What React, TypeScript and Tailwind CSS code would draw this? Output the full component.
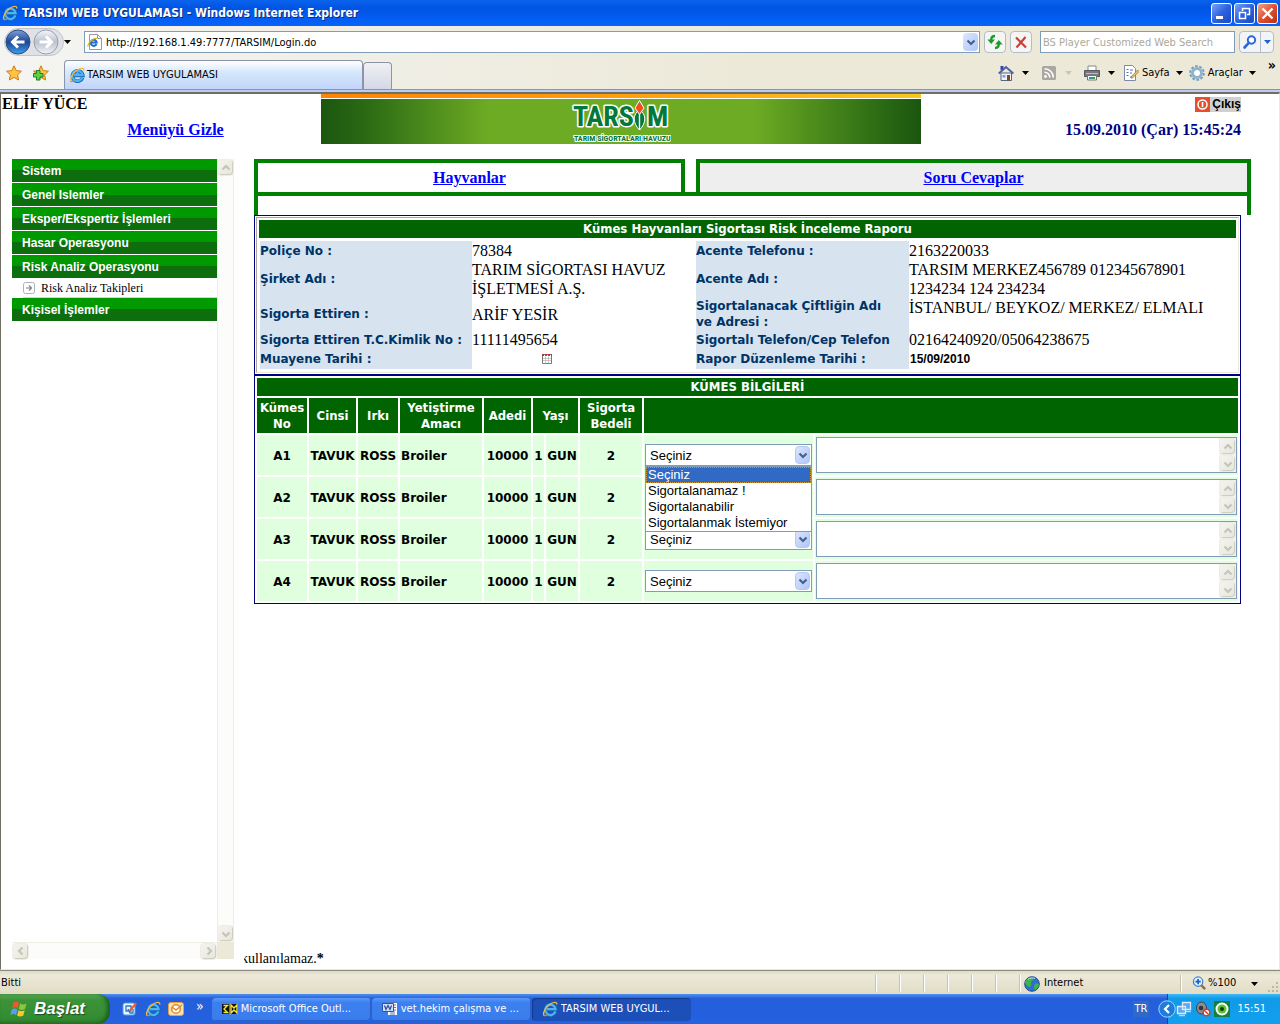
import type { ReactNode } from "react";

const menuTop = ["Sistem", "Genel Islemler", "Eksper/Ekspertiz İşlemleri", "Hasar Operasyonu", "Risk Analiz Operasyonu"];

const options = ["Seçiniz", "Sigortalanamaz !", "Sigortalanabilir", "Sigortalanmak İstemiyor"];

const coops = [
    { no: "A1", kind: "TAVUK", breed: "ROSS", purpose: "Broiler", count: "10000", age: "1", unit: "GUN", price: "2" },
    { no: "A2", kind: "TAVUK", breed: "ROSS", purpose: "Broiler", count: "10000", age: "1", unit: "GUN", price: "2" },
    { no: "A3", kind: "TAVUK", breed: "ROSS", purpose: "Broiler", count: "10000", age: "1", unit: "GUN", price: "2" },
    { no: "A4", kind: "TAVUK", breed: "ROSS", purpose: "Broiler", count: "10000", age: "1", unit: "GUN", price: "2" },
];

function IeLogo({ className = "size-4" }: { className?: string }) {
    return (
        <svg viewBox="0 0 16 16" className={className} aria-hidden="true">
            <path d="M13.6 10.600a5.200 5.200 0 1 1 .2-2.200H5" fill="none" stroke="#1464b8" strokeWidth="3.600" />
            <path d="M13.4 10.400a5.200 5.200 0 1 1 .2-2.200H5" fill="none" stroke="#4fb2f2" strokeWidth="2.200" />
            <path d="M2 14.400C.4 12.400 3.200 7 7.600 3.600 11.400.8 15 .6 14.800 3" fill="none" stroke="#f6b93a" strokeWidth="1.300" strokeLinecap="round" />
            <path d="M2 14.400c.8.500 2 .2 3-.4" fill="none" stroke="#d8920f" strokeWidth="1.200" strokeLinecap="round" />
        </svg>
    );
}

function Caret({ className = "fill-black" }: { className?: string }) {
    return (
        <svg viewBox="0 0 7 4" className={`h-1 w-[7px] shrink-0 ${className}`} aria-hidden="true">
            <path d="M0 0h7L3.500 4z" />
        </svg>
    );
}

function Chevron({ dir, className }: { dir: "up" | "down" | "left" | "right"; className: string }) {
    const d = {
        up: "M1.500 6.500 5 3l3.500 3.500",
        down: "M1.500 3.500 5 7l3.500-3.500",
        left: "M6.500 1.500 3 5l3.500 3.500",
        right: "M3.500 1.500 7 5 3.500 8.500",
    }[dir];
    return (
        <svg viewBox="0 0 10 10" className={`size-2.5 ${className}`} aria-hidden="true">
            <path d={d} fill="none" strokeWidth="2.200" />
        </svg>
    );
}

function ScrollButton({ dir }: { dir: "up" | "down" | "left" | "right" }) {
    return (
        <span className="flex size-[17px] shrink-0 items-center justify-center rounded-sm border border-[#eeede5] bg-linear-to-br from-[#f4f3ee] to-[#e8e7dd] shadow-[inset_-1px_-1px_0_#d0cebd]">
            <Chevron dir={dir} className="stroke-[#c5c4bb]" />
        </span>
    );
}

function WindowButton({ label, red, children }: { label: string; red?: boolean; children: ReactNode }) {
    return (
        <button
            aria-label={label}
            className={`size-[21px] rounded-[3px] border border-white ${red ? "bg-linear-to-br from-[#f0a08a] via-[#dd5030] to-[#b8300e]" : "bg-linear-to-br from-[#7ba2f4] via-[#2c62e0] to-[#1c48c4]"}`}
        >
            <svg viewBox="0 0 19 19" className="size-full" aria-hidden="true">
                {children}
            </svg>
        </button>
    );
}

function TitleBar() {
    return (
        <header className="flex h-[26px] items-center bg-linear-to-b from-[#0a63ec] via-[#0054e3] via-30% to-[#0663fb] pr-0.5 pl-0.5">
            <IeLogo />
            <h1 className="ml-1 flex-1 text-[12px] font-bold text-white [text-shadow:1px_1px_0_#0a2a80]">
                TARSIM WEB UYGULAMASI - Windows Internet Explorer
            </h1>
            <div className="flex gap-0.5">
                <WindowButton label="Simge durumuna küçült">
                    <path d="M4 12h7v3H4z" fill="#fff" />
                </WindowButton>
                <WindowButton label="Önceki boyut">
                    <path d="M7.500 7V4.500h7v6H12M7 4.500h8" fill="none" stroke="#fff" strokeWidth="1.500" />
                    <path d="M4.500 8.500h6v6h-6zM4 8.500h7" fill="none" stroke="#fff" strokeWidth="1.500" />
                </WindowButton>
                <WindowButton label="Kapat" red>
                    <path d="m4.500 4.500 10 10M14.500 4.500l-10 10" stroke="#fff" strokeWidth="2.300" />
                </WindowButton>
            </div>
        </header>
    );
}

function NavButtons() {
    return (
        <div className="flex w-[60px] shrink-0 items-center rounded-full border border-[#c3c6cc] bg-[#dfe1e4]">
            <button aria-label="Geri">
                <svg viewBox="0 0 26 26" className="size-[26px]" aria-hidden="true">
                    <defs>
                        <linearGradient id="back" x1="0" y1="0" x2="0" y2="1">
                            <stop offset="0" stopColor="#7f9fd6" />
                            <stop offset=".5" stopColor="#1c4596" />
                            <stop offset="1" stopColor="#3ea0ea" />
                        </linearGradient>
                    </defs>
                    <circle cx="13" cy="13" r="12" fill="url(#back)" stroke="#2a4a84" />
                    <path d="M19.500 13H8M13 7.500 7.500 13l5.500 5.500" fill="none" stroke="#fff" strokeWidth="3" />
                </svg>
            </button>
            <button aria-label="İleri" className="ml-0.5">
                <svg viewBox="0 0 26 26" className="size-[26px]" aria-hidden="true">
                    <defs>
                        <linearGradient id="fwd" x1="0" y1="0" x2="0" y2="1">
                            <stop offset="0" stopColor="#f6f8fa" />
                            <stop offset=".5" stopColor="#b9c2ce" />
                            <stop offset="1" stopColor="#f1f5f9" />
                        </linearGradient>
                    </defs>
                    <circle cx="13" cy="13" r="12" fill="url(#fwd)" stroke="#98a0ac" />
                    <path d="M6.500 13H18M13 7.500l5.500 5.500-5.500 5.500" fill="none" stroke="#fff" strokeWidth="3" />
                </svg>
            </button>
        </div>
    );
}

function AddressRow() {
    return (
        <div className="flex h-[31px] items-center bg-linear-to-r from-[#f4f4f2] to-[#ece9d8] to-60% pr-1.5 pl-1">
            <NavButtons />
            <Caret />
            <div className="ml-[13px] flex h-[22px] flex-1 items-center border border-[#7f9db9] bg-white">
                <svg viewBox="0 0 16 16" className="ml-0.5 size-4" aria-hidden="true">
                    <path d="M2.500.5h8l4 4v11h-12z" fill="#fff" stroke="#9a9a9a" />
                    <path d="M10.500.5v4h4" fill="none" stroke="#9a9a9a" />
                    <path d="M9.500 10a3 3 0 1 1 .2-1.500H4" fill="none" stroke="#1c6fc4" strokeWidth="2" />
                    <path d="M1 12.500C0 10 6 4 10.500 4" fill="none" stroke="#f0a818" strokeWidth="1.200" />
                </svg>
                <input
                    aria-label="Adres"
                    defaultValue="http://192.168.1.49:7777/TARSIM/Login.do"
                    className="ml-[3px] h-5 min-w-0 flex-1 pt-px outline-none"
                />
                <button aria-label="Adres listesi" className="mr-px flex h-[18px] w-[15px] items-center justify-center rounded-sm bg-linear-to-br from-[#dbe5fd] to-[#b0c6f8]">
                    <Chevron dir="down" className="stroke-[#44618c]" />
                </button>
            </div>
            <button aria-label="Yenile" className="ml-1 flex size-[22px] items-center justify-center rounded-sm border border-[#b4bccb] bg-[#f5f5f3]">
                <svg viewBox="0 0 16 16" className="size-4 shrink-0" aria-hidden="true">
                    <path d="M8 2C5.500 2 4.200 3.500 4.200 6" fill="none" stroke="#1f9a2c" strokeWidth="2.400" />
                    <path d="M.4 5.500h7.600L4.200 10z" fill="#1f9a2c" />
                    <path d="M8 14c2.500 0 3.800-1.500 3.800-4" fill="none" stroke="#1f9a2c" strokeWidth="2.400" />
                    <path d="M8 10.500h7.600L11.800 6z" fill="#1f9a2c" />
                </svg>
            </button>
            <button aria-label="Durdur" className="ml-1 flex size-[22px] items-center justify-center rounded-sm border border-[#b4bccb] bg-[#f5f5f3]">
                <svg viewBox="0 0 16 16" className="size-4 shrink-0" aria-hidden="true">
                    <path d="m3 3.500 10 10M12.500 3 3.500 13.500" stroke="#c9403a" strokeWidth="2.200" />
                </svg>
            </button>
            <input
                aria-label="Ara"
                placeholder="BS Player Customized Web Search"
                className="ml-2 h-[22px] w-[195px] border border-[#7f9db9] bg-white px-0.5 pt-px outline-none placeholder:text-[#aca899]"
            />
            <div className="ml-1 flex h-[22px] rounded-sm border border-[#b4bccb] bg-[#f3f4f6]">
                <button aria-label="Aramayı başlat" className="flex w-5 items-center justify-center">
                    <svg viewBox="0 0 16 16" className="size-4" aria-hidden="true">
                        <circle cx="9.500" cy="6" r="3.700" fill="#fff" stroke="#2a66e0" strokeWidth="2" />
                        <path d="M6.800 8.800 2.500 13.500" stroke="#2a66e0" strokeWidth="2.600" strokeLinecap="round" />
                    </svg>
                </button>
                <button aria-label="Arama seçenekleri" className="flex w-[13px] items-center justify-center border-l border-[#b4bccb]">
                    <Caret className="fill-[#1d62d8]" />
                </button>
            </div>
        </div>
    );
}

function StarIcon({ plus }: { plus?: boolean }) {
    return (
        <svg viewBox="0 0 16 16" className="size-4" aria-hidden="true">
            <path d="m8 .8 2.200 4.800 5.200.6-3.800 3.600 1 5.200L8 12.400 3.400 15l1-5.200L.6 6.200l5.200-.6z" fill="#fdc641" stroke="#d0781a" />
            {plus && <path d="M3.500 5.500h3.500v3h3V12H7v3H3.500v-3h-3V8.500h3z" fill="#5fd04a" stroke="#1e8424" />}
        </svg>
    );
}

function TabRow() {
    return (
        <div className="flex h-8 bg-linear-to-r from-[#f4f4f2] to-[#ece9d8] to-60% pr-1 pl-1.5">
            <div className="flex items-center gap-[11px]">
                <button aria-label="Sık kullanılanlar"><StarIcon /></button>
                <button aria-label="Sık kullanılanlara ekle"><StarIcon plus /></button>
            </div>
            <div className="mt-[3px] ml-[15px] flex w-[299px] items-center rounded-t border border-b-0 border-[#8c94a8] bg-linear-to-b from-white via-[#d6e8fb] via-40% to-[#c2d4fa] pl-1">
                <IeLogo />
                <span className="ml-0.5">TARSIM WEB UYGULAMASI</span>
            </div>
            <button aria-label="Yeni sekme" className="mt-[5px] w-[29px] rounded-t border border-b-0 border-[#8c94a8] bg-linear-to-b from-[#f0f0f4] to-[#d4d8e6]" />
            <div className="ml-auto flex items-center">
                <button className="flex items-center gap-2" aria-label="Giriş sayfası">
                    <svg viewBox="0 0 16 16" className="size-4" aria-hidden="true">
                        <path d="M2.500 1h3v4h-3z" fill="#3440c0" />
                        <path d="M3 8h10.500v7.500H3z" fill="#f4f4f8" stroke="#5a6480" />
                        <path d="M.8 8.500 8 2l7.400 6.500" fill="none" stroke="#4e62a4" strokeWidth="2" />
                        <path d="M9 10h3v5.500H9z" fill="#7a4a24" />
                        <path d="M4.500 10h3v2.500h-3z" fill="#6fa4e0" />
                    </svg>
                    <Caret />
                </button>
                <button className="ml-3 flex items-center gap-2" aria-label="Akışlar">
                    <svg viewBox="0 0 16 16" className="size-4" aria-hidden="true">
                        <rect x="1" y="1" width="14" height="14" rx="1.500" fill="#a9a8a0" />
                        <circle cx="4.500" cy="11.500" r="1.400" fill="#fff" />
                        <path d="M3.500 7.200a5.300 5.300 0 0 1 5.300 5.300M3.500 3.700a8.800 8.800 0 0 1 8.800 8.800" fill="none" stroke="#fff" strokeWidth="1.600" />
                    </svg>
                    <Caret className="fill-[#c9c6b8]" />
                </button>
                <button className="ml-3 flex items-center gap-2" aria-label="Yazdır">
                    <svg viewBox="0 0 16 16" className="size-4" aria-hidden="true">
                        <path d="M4 1h8v5H4z" fill="#fff" stroke="#888" />
                        <path d="M.5 5.500h15v6H.5z" fill="#77797e" stroke="#55575c" />
                        <path d="M2 8.500h12" stroke="#b9bbc0" />
                        <path d="M3.500 10.500h9v4.500h-9z" fill="#fff" stroke="#777" />
                        <path d="M5 12h3v2H5z" fill="#2b8de0" />
                        <path d="M8 12h3v2H8z" fill="#38a048" />
                    </svg>
                    <Caret />
                </button>
                <button className="ml-2 flex items-center">
                    <svg viewBox="0 0 16 16" className="size-4" aria-hidden="true">
                        <path d="M1.500.5h8l3 3v12h-11z" fill="#fff" stroke="#7c8aa8" />
                        <path d="M3.500 4.500h2M3.500 7.500h2M3.500 10.500h2M7 5h3M7 8h2M7 12h3" stroke="#4c72b8" />
                        <path d="m8 12 6.500-7L16 6.500 9.500 13H8z" fill="#f0c46a" stroke="#9a6a1e" strokeWidth=".7" />
                    </svg>
                    <span className="mr-1.5 ml-[3px]">Sayfa</span>
                    <Caret />
                </button>
                <button className="ml-1.5 flex items-center">
                    <svg viewBox="0 0 16 16" className="size-4" aria-hidden="true">
                        <circle cx="8" cy="8" r="6.800" fill="none" stroke="#7c9cb4" strokeWidth="2" strokeDasharray="2.700 1.570" />
                        <circle cx="8" cy="8" r="4.500" fill="#fff" stroke="#8fb4d0" strokeWidth="3" />
                    </svg>
                    <span className="mr-1.5 ml-[3px]">Araçlar</span>
                    <Caret />
                </button>
                <span className="ml-3 self-start text-[14px] leading-4 font-bold">»</span>
            </div>
        </div>
    );
}

function Banner() {
    return (
        <div className="w-[600px] shrink-0">
            <div className="h-1 bg-linear-to-r from-[#ff8400] via-[#ff9f0a] to-[#f7c81c]" />
            <div className="mt-px flex h-[45px] justify-center bg-[linear-gradient(to_right,#1b560f_0%,#2c6c14_8%,#6eab24_28%,#6eab24_72%,#2c6c14_93%,#1b560f_100%)]">
                <svg viewBox="0 0 100 45" className="h-[45px] w-[100px]" role="img" aria-label="TARSİM">
                    <g fill="#04783a" stroke="#fff" strokeWidth="3" paintOrder="stroke" strokeLinejoin="round" className="font-['Liberation_Sans_Narrow','Roboto_Condensed','Liberation_Sans',sans-serif] font-bold">
                        <text x="2" y="27" fontSize="28">TARS</text>
                        <text x="76" y="27" fontSize="28">M</text>
                        <text x="3" y="42" fontSize="8" strokeWidth="2">TARIM SİGORTALARI HAVUZU</text>
                    </g>
                    <path d="M68.500 11c-7 4-7 13 0 20 7-7 7-16 0-20z" fill="#04783a" stroke="#fff" />
                    <path d="M68.500 14v17" stroke="#fff" strokeWidth="1.400" />
                    <path d="m68.500 1.500 4.500 7.500-4.500 6.500L64 9z" fill="#f04e23" stroke="#fff" />
                </svg>
            </div>
        </div>
    );
}

function PageHeader() {
    return (
        <div className="flex h-[65px] text-[16px] leading-5 font-bold">
            <div className="w-[319px] shrink-0">
                <p>ELİF YÜCE</p>
                <p className="mt-1.5 pl-7 text-center">
                    <a href="#menu" className="text-[#0000ff] underline">Menüyü Gizle</a>
                </p>
            </div>
            <Banner />
            <div className="flex flex-1 flex-col items-end pt-[3px] pr-[38px]">
                <button className="flex h-[15px] items-center gap-0.5 bg-[#d0d0d0] font-['Liberation_Sans',sans-serif] text-[12px] leading-[15px]">
                    <svg viewBox="0 0 15 15" className="size-[15px]" aria-hidden="true">
                        <path d="M0 0h15v15H0z" fill="#e2502c" />
                        <circle cx="7.500" cy="7.500" r="4.500" fill="none" stroke="#fff" strokeWidth="1.500" />
                        <path d="M7.500 5v5" stroke="#fff" strokeWidth="1.600" />
                    </svg>
                    Çıkış
                </button>
                <p className="mt-2 text-[#000080]">15.09.2010 (Çar) 15:45:24</p>
            </div>
        </div>
    );
}

function MenuItem({ label }: { label: string }) {
    return (
        <a
            href="#menu"
            className="block h-[23px] bg-linear-to-b from-[#009900] from-50% to-[#0c6e0c] to-50% pl-2.5 font-['Liberation_Sans',sans-serif] text-[12px] leading-6 font-bold text-white"
        >
            {label}
        </a>
    );
}

function Sidebar() {
    return (
        <aside className="flex w-[222px] shrink-0 flex-col pb-2.5">
            <div className="flex flex-1">
                <nav className="flex flex-1 flex-col gap-px">
                    {menuTop.map((label) => (
                        <MenuItem key={label} label={label} />
                    ))}
                    <a href="#takip" className="-mt-px ml-[11px] flex h-5 items-center gap-1.5 border-b border-[#d4d4d4] text-[12px] leading-[18px]">
                        <svg viewBox="0 0 12 12" className="size-3" aria-hidden="true">
                            <rect x=".5" y=".5" width="11" height="11" rx="2" fill="#fff" stroke="#b0b0b8" />
                            <path d="M3 6h5M6 3.500 8.500 6 6 8.500" fill="none" stroke="#808088" strokeWidth="1.200" />
                        </svg>
                        Risk Analiz Takipleri
                    </a>
                    <div className="-mt-px">
                        <MenuItem label="Kişisel İşlemler" />
                    </div>
                </nav>
                <div className="flex w-[17px] flex-col items-center justify-between border-x border-[#eeede5] bg-[#fcfcfa]">
                    <ScrollButton dir="up" />
                    <ScrollButton dir="down" />
                </div>
            </div>
            <div className="flex h-[17px]">
                <div className="flex flex-1 items-center justify-between border-t border-[#eeede5] bg-[#fcfcfa]">
                    <ScrollButton dir="left" />
                    <ScrollButton dir="right" />
                </div>
                <div className="w-[17px] bg-[#ece9d8]" />
            </div>
        </aside>
    );
}

function Tabs() {
    return (
        <div>
            <div className="flex gap-[11px] border-b-4 border-[#008000] text-center text-[16px] leading-[30px] font-bold">
                <a href="#hayvanlar" className="h-[33px] flex-[430] border-4 border-b-0 border-[#008000] bg-white text-[#0000ff] underline">
                    Hayvanlar
                </a>
                <a href="#soru" className="h-[33px] flex-[556] border-4 border-b-0 border-[#008000] bg-[#eeeeee] text-[#0000ff] underline">
                    Soru Cevaplar
                </a>
            </div>
            <div className="h-[19px] border-x-4 border-[#008000]" />
        </div>
    );
}

function Label({ children }: { children: ReactNode }) {
    return (
        <th scope="row" className="bg-[#d7e3ef] p-0 text-left font-['DejaVu_Sans',sans-serif] text-[12px] leading-4 font-bold text-[#003366]">
            {children}
        </th>
    );
}

function ReportCard() {
    return (
        <section className="border border-[#000080] p-px">
            <div className="border border-t-[#aca899] border-r-[#ece9d8] border-b-[#ece9d8] border-l-[#aca899] p-0.5">
                <h2 className="h-[18px] bg-[#006400] text-center font-['DejaVu_Sans_Condensed','DejaVu_Sans',sans-serif] text-[13px] leading-[18px] font-bold text-white">
                    Kümes Hayvanları Sigortası Risk İnceleme Raporu
                </h2>
                <table className="mt-[3px] ml-px w-full table-fixed text-[16px] leading-[19px]">
                    <colgroup>
                        <col className="w-[212px]" />
                        <col className="w-[224px]" />
                        <col className="w-[213px]" />
                        <col />
                    </colgroup>
                    <tbody>
                        <tr className="h-[19px]">
                            <Label>Poliçe No :</Label>
                            <td>78384</td>
                            <Label>Acente Telefonu :</Label>
                            <td>2163220033</td>
                        </tr>
                        <tr className="h-[38px]">
                            <Label>Şirket Adı :</Label>
                            <td>TARIM SİGORTASI HAVUZ<br />İŞLETMESİ A.Ş.</td>
                            <Label>Acente Adı :</Label>
                            <td>TARSIM MERKEZ456789 012345678901<br />1234234 124 234234</td>
                        </tr>
                        <tr className="h-8">
                            <Label>Sigorta Ettiren :</Label>
                            <td>ARİF YESİR</td>
                            <Label>Sigortalanacak Çiftliğin Adı<br />ve Adresi :</Label>
                            <td className="align-top">İSTANBUL/ BEYKOZ/ MERKEZ/ ELMALI</td>
                        </tr>
                        <tr className="h-[19px]">
                            <Label>Sigorta Ettiren T.C.Kimlik No :</Label>
                            <td>11111495654</td>
                            <Label>Sigortalı Telefon/Cep Telefon</Label>
                            <td>02164240920/05064238675</td>
                        </tr>
                        <tr className="h-5">
                            <Label>Muayene Tarihi :</Label>
                            <td className="pl-[70px]">
                                <button aria-label="Takvim" className="block">
                                    <svg viewBox="0 0 10 10" className="size-2.5" aria-hidden="true">
                                        <path d="M.5.5h9v9h-9z" fill="#fff" stroke="#777" />
                                        <path d="M0 1h10" stroke="#cc3030" strokeWidth="2" strokeDasharray="2 1" />
                                        <path d="M1 4.500h8M1 6.500h8M3.500 2.500v7M6.500 2.500v7" stroke="#bbb" strokeWidth=".8" />
                                    </svg>
                                </button>
                            </td>
                            <Label>Rapor Düzenleme Tarihi :</Label>
                            <td className="pl-px font-['Liberation_Sans',sans-serif] text-[12px] font-bold">15/09/2010</td>
                        </tr>
                    </tbody>
                </table>
                <div className="h-px" />
            </div>
        </section>
    );
}

function DecisionSelect({ no, open }: { no: string; open?: boolean }) {
    return (
        <div className="relative mx-px h-[22px] font-['Liberation_Sans',sans-serif] text-[13px] font-normal">
            <select aria-label={`${no} kararı`} className="h-full w-full appearance-none border border-[#7f9db9] bg-white pt-px pl-1 outline-none">
                {options.map((o) => (
                    <option key={o}>{o}</option>
                ))}
            </select>
            <span className="pointer-events-none absolute top-0.5 right-0.5 flex h-[18px] w-[15px] items-center justify-center rounded-sm border border-[#b4c8f0] bg-linear-to-br from-[#dbe5fd] to-[#aec6fa]">
                <Chevron dir="down" className="stroke-[#44618c]" />
            </span>
            {open && (
                <ul role="listbox" aria-label={`${no} seçenekleri`} className="absolute top-[22px] left-0 z-10 w-full border border-[#7f9db9] bg-white text-left leading-4">
                    {options.map((o, i) => (
                        <li
                            key={o}
                            role="option"
                            aria-selected={i === 0}
                            className={i === 0 ? "bg-[#316ac5] pl-0.5 text-white outline-1 -outline-offset-1 outline-[#ce953a] outline-dotted" : "pl-0.5"}
                        >
                            {o}
                        </li>
                    ))}
                </ul>
            )}
        </div>
    );
}

function CoopTable() {
    const head = "bg-[#006400] p-0 text-white leading-4";
    const cell = "bg-[#dfffdf] p-0";
    const textCell = "bg-[#dfffdf] px-0 pt-px pb-0";
    return (
        <table className="w-full table-fixed border-separate border-spacing-[2px] border border-[#000080] text-center font-['DejaVu_Sans',sans-serif] text-[12px] font-bold">
            <colgroup>
                <col className="w-[50px]" />
                <col className="w-[47px]" />
                <col className="w-10" />
                <col className="w-[82px]" />
                <col className="w-[47px]" />
                <col className="w-[11px]" />
                <col className="w-8" />
                <col className="w-[62px]" />
                <col className="w-[169px]" />
                <col />
            </colgroup>
            <thead className="font-['DejaVu_Sans_Condensed','DejaVu_Sans',sans-serif] text-[13px]">
                <tr className="h-[18px]">
                    <th colSpan={10} className={head}>KÜMES BİLGİLERİ</th>
                </tr>
                <tr className="h-[35px]">
                    <th className={head}>Kümes No</th>
                    <th className={head}>Cinsi</th>
                    <th className={head}>Irkı</th>
                    <th className={head}>Yetiştirme Amacı</th>
                    <th className={head}>Adedi</th>
                    <th colSpan={2} className={head}>Yaşı</th>
                    <th className={head}>Sigorta Bedeli</th>
                    <th colSpan={2} className={head} />
                </tr>
            </thead>
            <tbody>
                {coops.map((c, i) => (
                    <tr key={c.no} className="h-10">
                        <td className={textCell}>{c.no}</td>
                        <td className={textCell}>{c.kind}</td>
                        <td className={textCell}>{c.breed}</td>
                        <td className={`${textCell} text-left`}><span className="pl-px">{c.purpose}</span></td>
                        <td className={textCell}>{c.count}</td>
                        <td className={textCell}>{c.age}</td>
                        <td className={textCell}>{c.unit}</td>
                        <td className={textCell}>{c.price}</td>
                        <td className={cell}><DecisionSelect no={c.no} open={i === 0} /></td>
                        <td className={cell}>
                            <div className="mx-px flex h-9 border border-[#7f9db9] bg-white">
                                <textarea aria-label={`${c.no} açıklama`} className="min-w-0 flex-1 resize-none overflow-hidden outline-none" />
                                <div className="flex flex-col bg-[#f4f3ee]">
                                    <ScrollButton dir="up" />
                                    <ScrollButton dir="down" />
                                </div>
                            </div>
                        </td>
                    </tr>
                ))}
            </tbody>
        </table>
    );
}

function StatusBar() {
    return (
        <div className="flex h-[23px] items-center bg-linear-to-b from-[#dedbc8] via-[#ece9d8] via-20% to-[#e0dcc6] pt-0.5 pl-px">
            <span className="flex-1">Bitti</span>
            {[0, 1, 2, 3, 4, 5].map((i) => (
                <span key={i} className="h-[17px] w-6 border-l border-[#c5c2b0] shadow-[inset_1px_0_0_#fff]" />
            ))}
            <div className="flex h-[17px] w-[161px] items-center border-l border-[#c5c2b0] pl-1 shadow-[inset_1px_0_0_#fff]">
                <svg viewBox="0 0 16 16" className="size-4" aria-hidden="true">
                    <circle cx="8" cy="8" r="7.300" fill="#2f6fd0" stroke="#234a8c" />
                    <path d="M3 3c2-2 5-1.500 6 0 .5 2-2 2-2 4 1 2-1 4-2 4-2-1-4-3-4-5zM11 8c2-1 3.500 0 4 0-.3 3-2 5-4 6-1.500-2-1.500-4 0-6z" fill="#3eb34a" />
                    <path d="M4 3.500C6 1.500 9 1.500 11 2.500" stroke="#cfe6fb" fill="none" />
                </svg>
                <span className="ml-1">Internet</span>
            </div>
            <div className="flex h-[17px] items-center border-l border-[#c5c2b0] pl-[11px] shadow-[inset_1px_0_0_#fff]">
                <svg viewBox="0 0 16 16" className="size-[15px]" aria-hidden="true">
                    <path d="m9.500 9.500 4.500 4.500" stroke="#a06a34" strokeWidth="2.600" />
                    <circle cx="6.500" cy="6" r="5" fill="#dcefff" stroke="#3f7fcc" strokeWidth="1.300" />
                    <path d="M6.500 3.200v5.600M3.700 6h5.600" stroke="#1d5fc0" strokeWidth="1.800" />
                </svg>
                <span className="w-11 pl-px">%100</span>
                <Caret />
            </div>
            <svg viewBox="0 0 12 12" className="mt-1.5 ml-2.5 size-3" aria-hidden="true">
                <path d="M8 1h2v2H8zM8 5h2v2H8zM4 5h2v2H4zM8 9h2v2H8zM4 9h2v2H4zM0 9h2v2H0z" fill="#b9b6a2" />
            </svg>
        </div>
    );
}

function TaskButton({ icon, label, active }: { icon: ReactNode; label: string; active?: boolean }) {
    return (
        <button
            className={`flex h-[23px] w-[159px] items-center rounded-sm pl-2.5 text-white ${active ? "bg-[#1c50b8] shadow-[inset_1px_1px_1px_#123a8c]" : "bg-linear-to-b from-[#5c98f8] via-[#3c80f0] via-20% to-[#3a7cec] shadow-[inset_-1px_-1px_0_#2a60cc]"}`}
        >
            {icon}
            <span className="ml-[3px] truncate">{label}</span>
        </button>
    );
}

function Taskbar() {
    return (
        <footer className="flex h-[30px] items-center bg-linear-to-b from-[#4f90ee] via-[#245edb] via-15% to-[#2462e0]">
            <button className="flex h-full w-[110px] items-center gap-1.5 rounded-r-xl bg-linear-to-b from-[#5cab58] via-[#3c9338] via-20% to-[#318a30] pl-2.5 font-['Liberation_Sans',sans-serif] text-[17px] font-bold text-white italic shadow-[inset_-3px_-1px_4px_#1c5c1c] [text-shadow:1px_1px_1px_#1c4c1c]">
                <svg viewBox="0 0 18 18" className="size-[18px]" aria-hidden="true">
                    <path d="M3.500 2.500C5.500 1.200 7 1.500 9 2.800L7.600 8.200C5.800 7 4 7 2 8.200z" fill="#f0582a" />
                    <path d="M10 3.500c2 1.200 4 1.200 6.500 0L15 9c-2 1.200-4 1.200-6.200 0z" fill="#8cc63e" />
                    <path d="M1.700 9.500C3.700 8.200 5.500 8.200 7.400 9.500L6 15c-2-1.200-3.700-1.200-5.700 0z" fill="#5a9cf4" />
                    <path d="M8.500 10.200c2 1.200 4 1.200 6.200 0l-1.400 5.400c-2 1.200-4.300 1.200-6.200 0z" fill="#fbc62c" />
                </svg>
                Başlat
            </button>
            <div className="flex flex-1 items-center pl-3">
                <button aria-label="Masaüstünü göster">
                    <svg viewBox="0 0 16 16" className="size-4" aria-hidden="true">
                        <rect x="1" y="2" width="12" height="12" rx="2" fill="#eef6ff" stroke="#4aa0e8" />
                        <path d="M4 5h5v5H4zM6 8l2 4h3V8" fill="none" stroke="#2a78c8" strokeWidth="1.300" />
                        <path d="m7 9 6.500-7.500L15 3 9 10z" fill="#e8602c" />
                    </svg>
                </button>
                <button aria-label="Internet Explorer" className="ml-[7px]"><IeLogo /></button>
                <button aria-label="Outlook" className="ml-[7px]">
                    <svg viewBox="0 0 16 16" className="size-4" aria-hidden="true">
                        <rect x=".5" y="1.500" width="15" height="13" rx="2.500" fill="#fbe3b4" stroke="#e8a040" />
                        <circle cx="8" cy="8" r="4.300" fill="#fff" stroke="#e08a28" strokeWidth="1.500" />
                        <path d="m4 6 4 3 6-5" fill="none" stroke="#e08a28" strokeWidth="1.400" />
                    </svg>
                </button>
                <span className="ml-3 self-start text-[14px] leading-4 text-white">»</span>
                <div className="ml-2 flex gap-px">
                    <TaskButton
                        label="Microsoft Office Outl..."
                        icon={
                            <svg viewBox="0 0 16 16" className="size-4 shrink-0" aria-hidden="true">
                                <path d="M0 3h7v10H0zM8 3h8v10H8z" fill="#111" />
                                <path d="M1.500 4.500h4L2 8l3.500 3.500h-4M9 4l3 3 3-3v8l-3-3-3 3z" fill="none" stroke="#f4e43c" strokeWidth="1.400" />
                            </svg>
                        }
                    />
                    <TaskButton
                        label="vet.hekim çalışma ve ..."
                        icon={
                            <svg viewBox="0 0 16 16" className="size-4 shrink-0" aria-hidden="true">
                                <path d="M5.500 1.500h10v13h-10z" fill="#fff" stroke="#5a78b8" />
                                <path d="M8 11h5M8 13h5M12 4h2M12 6.500h2M12 9h2" stroke="#5a78b8" />
                                <path d="M.5 2.500h11v8H.5z" fill="#d6e2f8" stroke="#2c52a8" />
                                <path d="m2.500 4.500 1.500 4 2-4 2 4 1.500-4" fill="none" stroke="#2c52a8" strokeWidth="1.300" />
                            </svg>
                        }
                    />
                    <TaskButton active label="TARSIM WEB UYGUL..." icon={<IeLogo className="size-4 shrink-0" />} />
                </div>
            </div>
            <span className="mr-[18px] bg-[#316ac5] px-0.5 leading-4 text-white">TR</span>
            <div className="flex h-full items-center border-l border-[#0a4a98] bg-linear-to-b from-[#3cb8f4] via-[#109ae8] via-15% to-[#12a0ee] pr-3.5 text-white">
                <button aria-label="Simgeleri göster" className="-ml-2.5">
                    <svg viewBox="0 0 18 18" className="size-[18px]" aria-hidden="true">
                        <circle cx="9" cy="9" r="8.200" fill="#1c7ce0" stroke="#a4d4f8" />
                        <path d="M11 5 7 9l4 4" fill="none" stroke="#fff" strokeWidth="2.200" />
                    </svg>
                </button>
                <svg viewBox="0 0 16 16" className="size-4" aria-hidden="true">
                    <path d="M6.500 1.500h8v7h-8zM1.500 5.500h8v7h-8z" fill="#5aa8f4" stroke="#dfe8f4" strokeWidth="1.300" />
                    <path d="M3 14.500h6M10 10.500h5" stroke="#c4d0e0" strokeWidth="1.500" />
                </svg>
                <svg viewBox="0 0 16 16" className="ml-[3px] size-4" aria-hidden="true">
                    <ellipse cx="6.500" cy="7" rx="5" ry="6" fill="#8c8c90" stroke="#444" />
                    <circle cx="6" cy="7" r="2.300" fill="#33343a" />
                    <circle cx="11.500" cy="11.500" r="3.300" fill="#fff" stroke="#d83a24" strokeWidth="1.400" />
                    <path d="m9.500 9.500 4 4" stroke="#d83a24" strokeWidth="1.400" />
                </svg>
                <svg viewBox="0 0 16 16" className="ml-[3px] size-4" aria-hidden="true">
                    <path d="M0 0h16v16H0z" fill="#148040" />
                    <circle cx="8" cy="8" r="6.500" fill="#fff" />
                    <circle cx="8" cy="8" r="4.500" fill="#5cc02c" />
                    <circle cx="8" cy="8" r="2" fill="#0c3c18" />
                </svg>
                <span className="ml-[7px]">15:51</span>
            </div>
        </footer>
    );
}

export default function App() {
    return (
        <div className="flex min-h-screen flex-col font-['DejaVu_Sans_Condensed','DejaVu_Sans',sans-serif] text-[11px] text-black">
            <TitleBar />
            <AddressRow />
            <TabRow />
            <div className="h-[3px] border-t border-[#8c94a8] bg-[#bccbf2]" />
            <main className="flex flex-1 flex-col border border-t-2 border-t-[#716f64] border-r-[#ece9d8] border-b-[#ece9d8] border-l-[#716f64] bg-white pl-px font-['Liberation_Serif',serif]">
                <PageHeader />
                <div className="flex flex-1 pl-2.5">
                    <Sidebar />
                    <div className="flex flex-1 flex-col pr-7 pl-2.5">
                        <div className="flex-1 pl-2.5">
                            <Tabs />
                            <div className="mr-2.5">
                                <ReportCard />
                                <CoopTable />
                            </div>
                        </div>
                        <div className="overflow-hidden text-[14px] leading-5">
                            <p className="-ml-[3px]">kullanılamaz.<b>*</b></p>
                        </div>
                    </div>
                </div>
            </main>
            <div className="h-px bg-[#8c8a7c]" />
            <StatusBar />
            <Taskbar />
        </div>
    );
}
